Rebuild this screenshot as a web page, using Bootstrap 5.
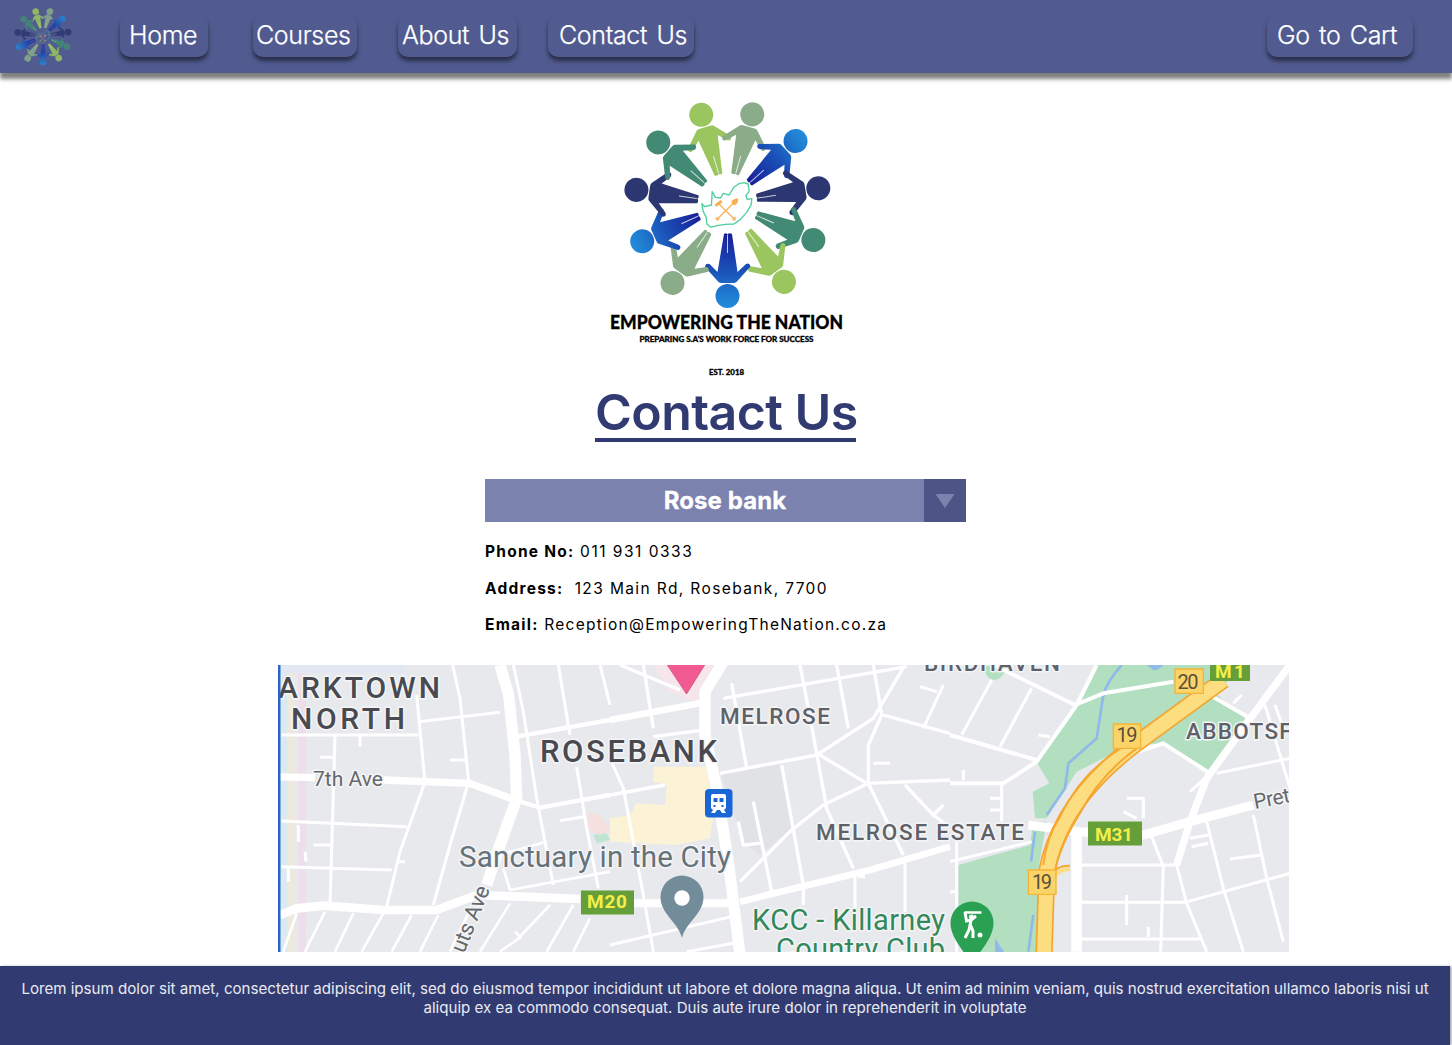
<!DOCTYPE html>
<html lang="en">
<head>
<meta charset="utf-8">
<meta name="viewport" content="width=device-width, initial-scale=1">
<title>Empowering the Nation - Contact Us</title>
<link href="https://cdn.jsdelivr.net/npm/bootstrap@5.3.0/dist/css/bootstrap.min.css" rel="stylesheet">
<style>
body{font-family:Inter,"Liberation Sans",sans-serif;color:#000;background:#fff;overflow:hidden;height:1045px}
.topbar{height:73px;background:#515b90;box-shadow:0 6px 4px rgba(0,0,0,.5);padding:0 39px 0 13px}
.brand-mark{width:60px;height:60px;margin-right:47px}
.pill{height:42px;margin-top:-1px;border-radius:10px;color:#fff;font-size:25px;line-height:41px;font-weight:300;letter-spacing:-.35px;word-spacing:2.7px;-webkit-text-stroke:.25px #fff;white-space:nowrap;text-decoration:none;box-shadow:0 4px 4px rgba(0,0,0,.5);background:#515b90}
.pill:hover{color:#fff}
.p-home{width:88px;padding-left:9px;margin-right:45px}
.p-courses{width:104px;padding-left:3px;margin-right:41px}
.p-about{width:119px;padding-left:4px;margin-right:31px}
.p-contact{width:146px;padding-left:11px}
.p-cart{width:146px;padding-left:10px}
.page-column{width:1451px}
.crest{width:250px;height:289px;margin-top:17px}
.page-title{font-size:50px;line-height:58px;font-weight:600;letter-spacing:-.55px;color:#313b72;border-bottom:4px solid #313b72;width:261px;height:59px;margin:4px 0 37px;white-space:nowrap}
.picker{width:481px;height:43px;background:#7c82ae;border:0;color:#fff;font-weight:700;font-size:24px;letter-spacing:.1px;-webkit-text-stroke:.3px #fff}
.picker-label{padding-left:41px}
.picker-arrow{width:42px;background:#4f5486}
.details{width:481px;font-size:15.5px;letter-spacing:1.25px;margin-top:12px}
.details p{height:36.7px;line-height:36.7px;margin:0;white-space:pre}
.phone-value{letter-spacing:1.5px}
.address-value{letter-spacing:1.38px}
.map-view{width:1011px;height:287px;margin:21px 0 0 278px}
.foot{width:1450px;height:79px;margin-top:14px;background:#313b72;color:#e9eaf1;font-size:15.12px;line-height:18.5px;padding-top:14px;box-shadow:2px 0 2px rgba(0,0,0,.3);white-space:nowrap}
</style>
</head>
<body class="d-flex flex-column">
<svg width="0" height="0" class="position-absolute" aria-hidden="true">
<defs>
<linearGradient id="blue" gradientUnits="userSpaceOnUse" x1="0" y1="30" x2="0" y2="105"><stop offset="0" stop-color="#19209a"/><stop offset=".45" stop-color="#1a4db5"/><stop offset=".85" stop-color="#2080d2"/><stop offset="1" stop-color="#248bdc"/></linearGradient>
<g id="person">
<circle cx="0" cy="92" r="12"/>
<path d="M-3.500 30Q-1.500 28.500 0 30.500Q1.500 28.500 4.500 30L10 68L18.500 60Q22 58 23 62.500L9 78Q8 79 6 79H-6Q-8 79 -9 78L-22.500 63Q-22 58.500 -18 60L-10 68Z"/>
<path d="M0 31V49" stroke="#fff" stroke-width="1" stroke-opacity=".75"/>
</g>
<g id="ring">
<use href="#person" fill="#9bc55f" transform="rotate(163.400)"/>
<use href="#person" fill="#8bac88" transform="rotate(-164.400)"/>
<use href="#person" fill="url(#blue)" transform="rotate(-132.300)"/>
<use href="#person" fill="#2c3772" transform="rotate(-99.200)"/>
<use href="#person" fill="#438a75" transform="rotate(-66.700) translate(0 1.500)"/>
<use href="#person" fill="#9bc55f" transform="rotate(-35.600) translate(0 5)"/>
<use href="#person" fill="url(#blue)" transform="translate(0 1)"/>
<use href="#person" fill="#8bac88" transform="rotate(34.500) translate(0 5)"/>
<use href="#person" fill="url(#blue)" transform="rotate(65.800) translate(0 1.500)"/>
<use href="#person" fill="#2c3772" transform="rotate(98.200)"/>
<use href="#person" fill="#438a75" transform="rotate(131.200)"/>
<g transform="translate(-127 -113) scale(.33333)">
<path d="M304 341L313 350L333 345L335 305L345 322L360 324L368 310L386 315L400 292L415 281L430 278L443 282L446 305L436 316L440 328L454 326L452 344L440 365L420 388L400 402L374 403L350 407L331 412L319 402L317 382L308 364Z" fill="none" stroke="#4fcfa0" stroke-width="4" stroke-linejoin="round"/>
<path d="M353 340L402 388M401 337L350 388" stroke="#f7b45f" stroke-width="4"/>
<path d="M342 344L360 330L367 336L348 350Z M393 334Q402 324 413 325Q415 338 403 346Q394 345 393 334Z" fill="#f7ad50"/>
<circle cx="351" cy="386" r="6" fill="#f9bd72"/><circle cx="401" cy="386" r="6" fill="#f9bd72"/>
</g>
</g>
</defs>
</svg>

<nav class="topbar d-flex align-items-center flex-shrink-0">
<svg class="brand-mark" viewBox="-108 -105 216 216" opacity=".85" aria-label="Logo"><use href="#ring"/></svg>
<a class="pill p-home" href="#">Home</a>
<a class="pill p-courses" href="#">Courses</a>
<a class="pill p-about" href="#">About Us</a>
<a class="pill p-contact" href="#">Contact Us</a>
<a class="pill p-cart ms-auto" href="#">Go to Cart</a>
</nav>

<main>
<div class="page-column d-flex flex-column align-items-center">
<svg class="crest" viewBox="600 90 250 289" font-family="Lato, sans-serif" font-weight="900" text-anchor="middle">
<use href="#ring" transform="translate(726.500 203)"/>
<text x="725.500" y="328.500" font-size="18.500" textLength="233" lengthAdjust="spacingAndGlyphs" stroke="#000" stroke-width=".3">EMPOWERING THE NATION</text>
<text x="725.500" y="341.500" font-size="7.500" textLength="174" lengthAdjust="spacingAndGlyphs" stroke="#000" stroke-width=".3">PREPARING S.A'S WORK FORCE FOR SUCCESS</text>
<text x="725.500" y="374.500" font-size="7.500" textLength="35" lengthAdjust="spacingAndGlyphs" stroke="#000" stroke-width=".3">EST. 2018</text>
</svg>
<h1 class="page-title">Contact Us</h1>
<button class="picker d-flex p-0" type="button">
<span class="picker-label flex-grow-1 align-self-center">Rose bank</span>
<span class="picker-arrow d-flex align-self-stretch align-items-center justify-content-center"><svg width="20" height="14" viewBox="0 0 20 14"><path d="M.5 0H19.500L10 14Z" fill="#7c82ae"/></svg></span>
</button>
<div class="details">
<p><b>Phone No:</b> <span class="phone-value">011 931 0333</span></p>
<p><b>Address:</b>  <span class="address-value">123 Main Rd, Rosebank, 7700</span></p>
<p><b>Email:</b> Reception@EmpoweringTheNation.co.za</p>
</div>
</div>

<svg class="map-view d-block" viewBox="278 665 1011 287" font-family="Roboto, sans-serif">
<rect x="278" y="665" width="1011" height="287" fill="#e8e9ed"/>
<path d="M281 665h9v287h-9z" fill="#dceaf0"/><path d="M287 665h9v287h-9z" fill="#eee9df"/><path d="M298 665h8v287h-8z" fill="#ecdfeb"/><path d="M281 665h125v8H281z" fill="#e1e8f1"/>
<!-- western parks, shops and greens -->
<g transform="translate(610 655) scale(.33333)">
<path d="M330 350L510 330L545 520L450 600L400 560Z" fill="#e1e2e6"/>
<path d="M130 335H290L300 400L285 480H310L300 550L200 570L0 560V490L60 480L80 445L165 450L170 390L130 380Z" fill="#fcf2d6"/>
<path d="M-65 470L-30 480L0 530L-40 540L-65 520Z" fill="#f5dfdf"/><path d="M-50 540L-10 535L0 555L-40 565Z" fill="#bfe4d2"/>
<path d="M130 30H330L280 150L180 110Z" fill="#f7e5ec"/>
</g>
<g transform="translate(950 655) scale(.33333)">
<path d="M440 30H900L790 110L885 190L780 360L640 270L560 260L380 350L290 490H255L248 410L298 385L260 322L370 160Z" fill="#b2dfc0"/>
<path d="M100 30H170Q160 75 130 75Q105 70 100 30Z" fill="#b2dfc0"/>
<path d="M25 630L240 570L250 500H290L265 640V900H100L25 760Z" fill="#b2dfc0"/>
<path d="M515 30Q470 80 460 120L440 250L355 325L345 400L290 480M255 530L243 620M250 780L235 890" fill="none" stroke="#8fb9e9" stroke-width="8"/>
<path d="M590 30h50q-15 18-30 15z M135 850L165 895H135z" fill="#91b9ea"/>
</g>
<!-- streets -->
<g fill="none" stroke="#fff" stroke-linejoin="round">
<g transform="translate(270 655) scale(.33333)">
<path d="M0 365L135 368M340 375L600 385L735 435" stroke-width="22"/>
<path d="M690 30L716 120L735 300L740 430L690 570L650 690" stroke-width="34"/>
<path d="M30 780L80 760L160 752L340 765L500 765L620 720L930 732" stroke-width="26"/>
<path d="M735 435L810 458L1020 420M740 245L1020 195" stroke-width="13"/>
<path d="M548 30L570 130L596 380L540 570L490 750M440 120L465 380L390 590L350 755M445 200L690 172M35 240H445M270 240V275M195 245L180 750M35 498L410 515M35 635L365 645M730 30L760 170L800 430L850 690M865 30L900 240M990 30L1020 150M920 335L950 520L985 700M870 497L940 485M150 307H190M540 315H590M130 570H180M385 620H405M85 510V560M105 590L108 620M55 640V680" stroke-width="9"/>
<path d="M80 775L40 890M165 770L105 890M250 775L195 890M340 775L275 890M425 780L365 890M505 780L450 890M600 765L540 890M720 745L630 890M840 750L740 855L690 890M735 830L755 850M910 750L830 890M960 790L910 890M720 705L1020 650M700 640L720 705M830 560L690 600" stroke-width="8"/>
</g>
<g transform="translate(610 655) scale(.33333)">
<path d="M340 20L285 110L285 240L320 400L355 620L390 900" stroke-width="34"/>
<path d="M0 195L270 145M390 740L780 645L1020 575" stroke-width="20"/>
<path d="M70 745H380" stroke-width="24"/>
<path d="M0 765L-30 750M0 420L165 390M130 245L280 225M100 30L130 220M30 30L210 105M330 355L620 300L790 190L885 30M340 130L890 35M365 85L410 340M570 30L610 240L650 460L730 640M680 30L715 220M790 30L815 180L775 270L775 385L880 600M820 180L1020 235M630 300L770 385L1020 375M775 385L640 450L540 530L390 680M515 330L580 690V750M430 440L485 710M385 500L400 570L450 565M885 390L970 480L1000 450M970 480L1010 510" stroke-width="10"/>
<path d="M0 310L40 400L100 720L130 890M0 870L365 785M230 890L370 865M735 650V770M885 605V770M790 325H840M1000 90L940 220M930 95L980 110M745 665H765" stroke-width="9"/>
</g>
<g transform="translate(950 655) scale(.33333)">
<path d="M1020 30L890 205L770 370L720 500L680 630" stroke-width="22"/>
<path d="M235 510L390 530L580 540L720 500L910 450" stroke-width="27"/>
<path d="M380 540V890" stroke-width="32"/>
<path d="M440 30L380 150L260 320L160 385H0M375 150L460 115L670 80M130 30L375 150M0 240L260 315M780 120L900 190M565 290L640 265L780 355" stroke-width="12"/>
<path d="M125 75L35 240M245 100L150 275M265 240L300 245M155 390V500M120 430H150M120 465H150M40 345V375M20 560V890M0 710H20M0 620L245 560" stroke-width="9"/>
<path d="M390 630H675M390 742H705L1020 655M390 852H755M605 545L640 635L632 890M530 720V810M595 815V845M680 630L710 745L770 890M770 500L820 700L880 890M910 480L950 670L1000 860M840 612L935 600M800 355L1020 310M945 150L1020 400M975 150L1000 220M720 550L775 540M725 575L775 565M720 410L765 370M875 120L850 145M530 430H580V490M520 470L560 490" stroke-width="9"/>
</g>
</g>
<!-- motorway -->
<g transform="translate(950 655) scale(.33333)" fill="none">
<path d="M820 75L560 265Q420 370 350 490Q305 570 290 650L282 900" stroke="#f3a52d" stroke-width="52"/>
<path d="M820 75L560 265Q420 370 350 490Q305 570 290 650L282 900" stroke="#fcdd80" stroke-width="42"/>
<path d="M520 275Q395 350 330 485Q290 545 280 630M560 280Q450 360 390 475Q330 570 315 650M300 670Q315 630 360 632" stroke="#f5a832" stroke-width="6"/>
<path d="M310 670Q325 642 360 642" stroke="#fcdd80" stroke-width="12"/>
<path d="M675 42H760V115H675ZM490 207H572V280H490ZM235 645H318V718H235Z" fill="#fbd469" stroke="#f3b437" stroke-width="4"/>
</g>
<!-- road shields -->
<path d="M581 890.500h53v24h-53zM1088 821.500h54v24h-54zM1210 665h40v16h-40z" fill="#669f3a"/>
<g fill="#f5ee48" font-size="19" font-weight="700" text-anchor="middle"><text x="607" y="908" textLength="40">M20</text><text x="1114" y="841" textLength="38">M31</text><text x="1230" y="677.500" textLength="30">M1</text></g>
<g fill="#5b5039" font-size="20" text-anchor="middle"><text x="1188" y="689" textLength="21">20</text><text x="1127" y="742" textLength="21">19</text><text x="1042" y="889" textLength="20">19</text></g>
<!-- place names -->
<g stroke="#f4f5f7" stroke-width="3" paint-order="stroke" stroke-linejoin="round">
<g fill="#494a50" font-weight="500">
<text x="278" y="698" font-size="30" textLength="162">ARKTOWN</text>
<text x="291" y="728.500" font-size="30" textLength="114">NORTH</text>
<text x="540" y="761.500" font-size="31" textLength="177">ROSEBANK</text>
<g fill="#606167"><text x="720" y="723.500" font-size="22.500" textLength="110">MELROSE</text>
<text x="816" y="839.500" font-size="22.500" textLength="208">MELROSE ESTATE</text>
<text x="924" y="671" font-size="22.500" textLength="136">BIRDHAVEN</text>
<text x="1186" y="738.500" font-size="22.500" textLength="138">ABBOTSFOR</text></g>
</g>
<g fill="#65686c" font-size="21">
<text x="313" y="786" textLength="70">7th Ave</text>
<text transform="translate(1255 809) rotate(-11)" textLength="70">Pretoria</text>
<text transform="translate(464 954) rotate(-68)" textLength="70" font-size="22">uts Ave</text>
</g>
<text x="459" y="867" font-size="29.500" textLength="272" fill="#65727a">Sanctuary in the City</text>
<g fill="#32885b" font-size="29"><text x="752" y="930" textLength="193">KCC - Killarney</text><text x="776" y="959" textLength="169">Country Club</text></g>
</g>
<!-- pins -->
<path d="M666 663H706L686.500 694Z" fill="#f15b92" stroke="#d24b7b" stroke-width=".8"/>
<path d="M682 938C678 922 660.500 914 660.500 897A21.500 21.500 0 0 1 703.500 897C703.500 914 686 922 682 938Z" fill="#738c99"/><circle cx="682" cy="898" r="7.700" fill="#fff"/>
<path d="M972 970C970 955 950.500 941 950.500 923A21.500 21.500 0 0 1 993.500 923C993.500 941 974 955 972 970Z" fill="#29a052"/>
<path d="M964.500 912.500H981.500" stroke="#fff" stroke-width="2.500"/><circle cx="971.500" cy="917" r="2.500" fill="#fff"/><path d="M965 912L966.500 921L971 920L969 930L965 938M970 924L973 931V938M970 921L976 916" stroke="#fff" stroke-width="3" fill="none"/><circle cx="980" cy="935" r="2.500" fill="#fff"/>
<rect x="705" y="789" width="27.500" height="28.500" rx="4" fill="#1967d6"/>
<path d="M711 796Q711 794 713 794H724Q726 794 726 796V808L724 810L726 813H722L720 810H717L715 813H711L713 810L711 808Z" fill="#fff"/><path d="M713.500 798h4v4h-4zM719.500 798h4v4h-4zM713.500 805h2v2h-2zM721.500 805h2v2h-2z" fill="#1967d6"/>
<rect x="278" y="665" width="2.500" height="287" fill="#2766c5"/>
</svg>
</main>

<footer class="foot text-center flex-shrink-0">Lorem ipsum dolor sit amet, consectetur adipiscing elit, sed do eiusmod tempor incididunt ut labore et dolore magna aliqua. Ut enim ad minim veniam, quis nostrud exercitation ullamco laboris nisi ut<br>aliquip ex ea commodo consequat. Duis aute irure dolor in reprehenderit in voluptate</footer>
<script src="https://cdn.jsdelivr.net/npm/bootstrap@5.3.0/dist/js/bootstrap.bundle.min.js"></script>
</body>
</html>
